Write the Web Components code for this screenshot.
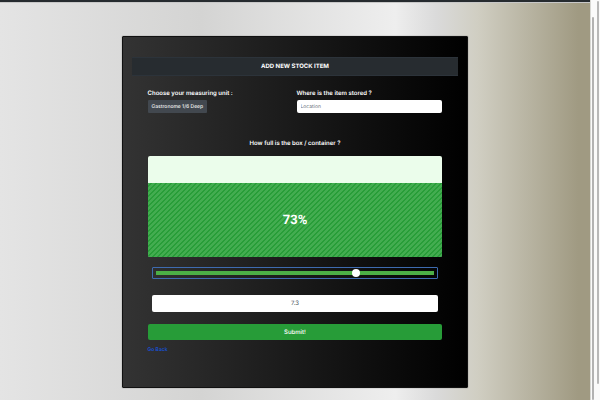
<!DOCTYPE html>
<html lang="en">
<head>
<meta charset="utf-8">
<title>Add new stock item</title>
<style>
html, body { height: 100%; }
body { margin: 0; overflow: hidden; font-family: Inter, "Liberation Sans", sans-serif; text-rendering: geometricPrecision; color: #fff; }
</style>
</head>
<body>
<stock-page>
  <stock-card heading="ADD NEW STOCK ITEM">
    <stock-form></stock-form>
  </stock-card>
</stock-page>
<script>
const define = (name, html, setup) => {
  const template = document.createElement('template');
  template.innerHTML = html;
  customElements.define(name, class extends HTMLElement {
    connectedCallback() {
      if (this.shadowRoot) return;
      this.attachShadow({ mode: 'open' }).append(template.content.cloneNode(true));
      if (setup) setup(this, this.shadowRoot);
    }
  });
};

define('scroll-rail', `
<style>
:host { display: block; box-sizing: border-box; background: #fafafa; padding: var(--rail-padding); }
div { height: 100%; border-radius: 2px; background: var(--thumb); }
</style><div></div>`);

define('stock-page', `
<style>
:host { display: flex; height: 100%; background: #fafafa; }
.view { flex: 1; display: flex; flex-direction: column; min-width: 0; }
.bar { height: 2px; background: #262b2f; border-bottom: 1px solid #c8c8c8; }
main { flex: 1; padding: 33px 0 12px; background: linear-gradient(90deg, #e4e4e4 0%, #d4d4d3 34%, #eeeeee 67%, #dadada 74%, #d0cec2 81%, #a09a82 98%, #a09a82 100%); }
.inner { width: 6px; border-left: 1px solid #d8d8d4; --rail-padding: 17px 2px 0 1px; --thumb: #b2b2b2; }
.outer { width: 4px; --rail-padding: 1px 1px 16px; --thumb: #b8b8b8; }
</style>
<div class="view"><div class="bar"></div><main><slot></slot></main></div>
<scroll-rail class="inner"></scroll-rail>
<scroll-rail class="outer"></scroll-rail>`);

define('stock-card', `
<style>
:host { display: block; box-sizing: border-box; width: 58.8%; height: 100%; margin: 0 auto; padding: 20px 9px; border: 1px solid #111; border-radius: 1px; background: linear-gradient(90deg, #333 0%, #000 100%); box-shadow: 0 0 1px #444; }
h1 { margin: 0; border: solid #2c333a; border-width: 1px 0; background: #272c30; font-size: 6px; line-height: 17px; font-weight: 700; text-align: center; }
.body { padding: 13px 16px 0; }
</style>
<h1></h1><div class="body"><slot></slot></div>`,
(host, root) => { root.querySelector('h1').textContent = host.getAttribute('heading'); });

define('fill-gauge', `
<style>
:host { display: flex; flex-direction: column; justify-content: flex-end; position: relative; height: 101px; border-radius: 2px; overflow: hidden; background: #ebfdeb; }
.fill { background: #289d38 linear-gradient(135deg, #43ac50 25%, #289d38 25% 50%, #43ac50 50% 75%, #289d38 75%) 0 0 / 5px 5px; }
.text { position: absolute; inset: 0; top: 28px; display: grid; place-items: center; font-family: Roboto, sans-serif; font-size: 13px; font-weight: 700; }
</style>
<div class="fill"></div><div class="text"></div>`,
(host, root) => {
  const value = host.getAttribute('value') + '%';
  root.querySelector('.fill').style.height = value;
  root.querySelector('.text').textContent = value;
});

define('stock-form', `
<style>
:host { display: block; }
form { display: flex; flex-direction: column; }
.fields { display: grid; grid-template-columns: 1fr 1fr; gap: 3px; }
.field { display: flex; flex-direction: column; align-items: flex-start; gap: 1px; }
label { font-size: 6px; line-height: 10px; font-weight: 600; }
button, input { box-sizing: border-box; margin: 0; border: 0; font-family: inherit; text-rendering: inherit; }
.unit { height: 13px; padding: 0 4px; border-radius: 1px; background: #42484f; color: #f0f0f0; font-size: 5px; font-weight: 500; }
.location { width: 100%; height: 13px; padding: 0 4px; border-radius: 2px; background: #fff; color: #495057; font-size: 5px; }
.location::placeholder { color: #6c757d; opacity: 1; }
.how { margin: 26px 0 7px; text-align: center; }
.range { appearance: none; height: 12px; margin: 10px 4px 16px; padding: 0 3px; border: 1px solid #3e6bb0; border-radius: 1px; background: transparent; outline: 0; }
.range::-webkit-slider-runnable-track { height: 4px; background: #4caf46; }
.range::-webkit-slider-thumb { appearance: none; width: 8px; height: 8px; margin-top: -2px; border-radius: 50%; background: #fff; }
.amount { height: 17px; margin: 0 4px 12px; border-radius: 2px; background: #fff; color: #495057; font-size: 6px; text-align: center; }
.submit { height: 16px; border-radius: 2px; background: #279c38; color: #fff; font-size: 6px; font-weight: 500; }
a { align-self: flex-start; margin-top: 6px; color: #1650d8; font-size: 5px; line-height: 8px; font-weight: 600; text-decoration: none; }
</style>
<form>
  <div class="fields">
    <div class="field"><label for="unit">Choose your measuring unit :</label><button class="unit" id="unit" type="button">Gastronome 1/6 Deep</button></div>
    <div class="field"><label for="location">Where is the item stored ?</label><input class="location" id="location" placeholder="Location"></div>
  </div>
  <label class="how" for="level">How full is the box / container ?</label>
  <fill-gauge value="73"></fill-gauge>
  <input class="range" id="level" type="range" min="0" max="100" step="any" value="72.5">
  <input class="amount" type="text" aria-label="Amount" value="7.3">
  <button class="submit" type="submit">Submit!</button>
  <a href="#">Go Back</a>
</form>`);
</script>
</body>
</html>
